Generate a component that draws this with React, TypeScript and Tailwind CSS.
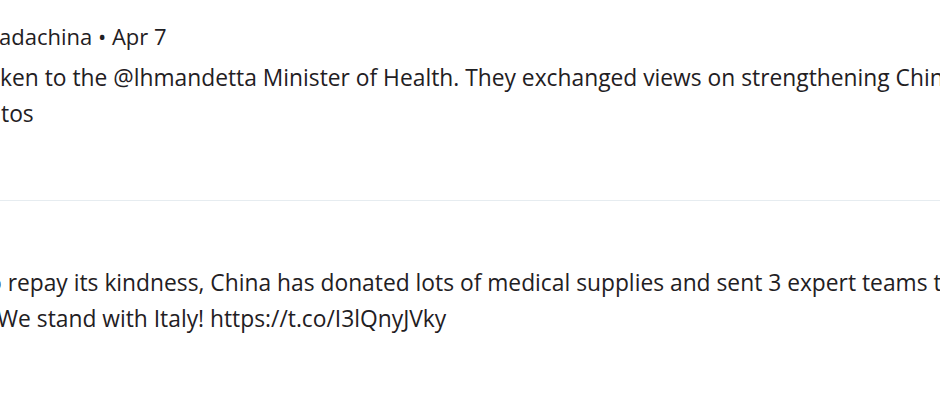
import React from "react";

interface TweetProps {
  meta?: string;
  lines: { text: string; offset: string }[];
  className?: string;
}

const Tweet: React.FC<TweetProps> = ({ meta, lines, className }) => {
  return (
    <div className={className}>
      {meta && (
        <div className="whitespace-nowrap leading-[30px] text-[22px] -ml-[1px]">{meta}</div>
      )}
      <div className={meta ? "mt-[9px]" : ""}>
        {lines.map((l, i) => (
          <div key={i} className={`whitespace-nowrap leading-[36px] text-[22.8px] ${l.offset}`}>
            {l.text}
          </div>
        ))}
      </div>
    </div>
  );
}

export default function App() {
  return (
    <div
      className="w-[940px] h-[400px] bg-white overflow-hidden text-[#1f2023]"
      style={{ fontFamily: '"Open Sans", "Noto Sans", sans-serif' }}
    >
      <Tweet
        className="pt-[21px] pb-[68px]"
        meta="adachina • Apr 7"
        lines={[
          {
            text: "ken to the @lhmandetta Minister of Health. They exchanged views on strengthening China",
            offset: "ml-0",
          },
          { text: "tos", offset: "ml-[1px]" },
        ]}
      />
      <div className="h-px bg-[#e6ecf0]" />
      <Tweet
        className="pt-[64px]"
        lines={[
          {
            text: "o repay its kindness, China has donated lots of medical supplies and sent 3 expert teams to",
            offset: "-ml-[12px]",
          },
          { text: "We stand with Italy! https://t.co/I3lQnyJVky", offset: "-ml-[3px]" },
        ]}
      />
    </div>
  );
}
